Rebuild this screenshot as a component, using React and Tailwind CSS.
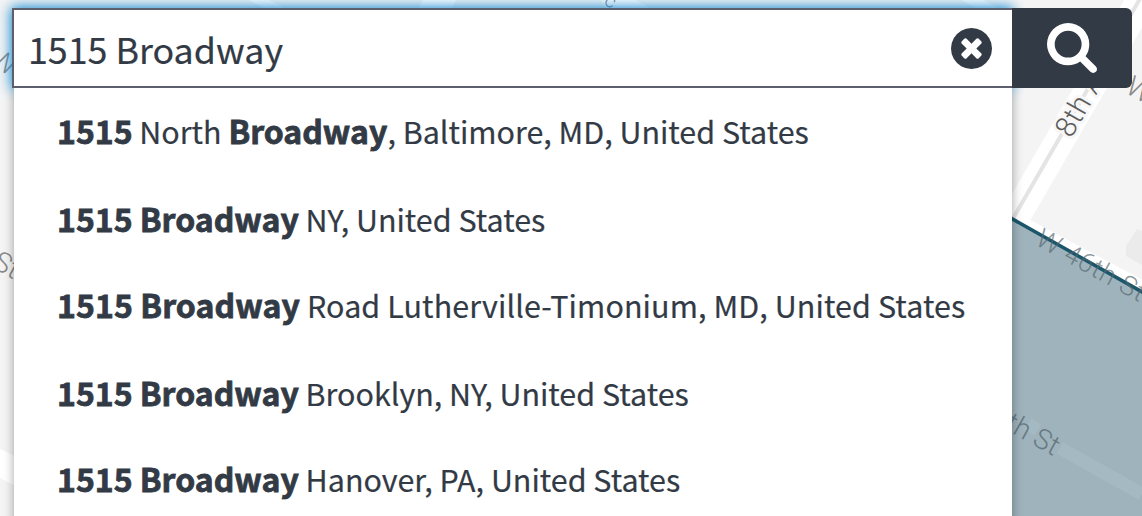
import React from "react";

const FONT = "font-['Noto_Sans_CJK_SC','Noto_Sans',sans-serif]";

const results = [
  { h: "h-[88px]", parts: [["1515", true], [" North ", false], ["Broadway", true], [", Baltimore, MD, United States", false]] },
  { h: "h-[86px]", parts: [["1515 Broadway", true], [" NY, United States", false]] },
  { h: "h-[88px]", tracking: "tracking-[0.1px]", parts: [["1515 Broadway", true], [" Road Lutherville-Timonium, MD, United States", false]] },
  { h: "h-[86px]", parts: [["1515 Broadway", true], [" Brooklyn, NY, United States", false]] },
  { h: "h-[80px]", parts: [["1515 Broadway", true], [" Hanover, PA, United States", false]] },
];

function MapBackdrop() {
  const label = "font-['Roboto',sans-serif] font-light";
  return (
    <svg className="absolute inset-0" width="1142" height="516" viewBox="0 0 1142 516" aria-hidden="true">
      <rect width="1142" height="516" fill="#f4f4f4" />
      <path d="M245 -2H265L300 16H280Z" fill="#fff" />
      <path d="M424 -2H457L450 12H417Z" fill="#fff" />
      <path d="M600 -2H632L665 16H610Z" fill="#fff" />
      <path d="M958 -2H980L1012 16H990Z" fill="#fff" />
      <path d="M-10 458L30 479" stroke="#fff" strokeWidth="26" />
      <path d="M997 249L1155 -24" stroke="#fff" strokeWidth="29" />
      <path d="M1000 212L1160 297" stroke="#fff" strokeWidth="14" />
      <path d="M1004 234L1152 -22" stroke="#e4e4e4" strokeWidth="4" />
      <path d="M1137 229L1142 231V265L1126 256V246Z" fill="#ebebeb" />
      <path d="M1000 212L1160 302V516H1000Z" fill="#9fb3bc" />
      <path d="M1028 424L1038 430M1060 448L1142 494" stroke="#a5b9c2" strokeWidth="13" />
      <path d="M1000 212L1160 302" stroke="#1b566b" strokeWidth="3.5" fill="none" />
      <g className={label} fontSize="28">
        <g stroke="#f7f7f7" strokeWidth="6" strokeLinejoin="round" paintOrder="stroke" fill="#5c5c5c">
          <text transform="translate(1071 139) rotate(-60)" fontSize="29" letterSpacing="0.4">8th A</text>
        </g>
        <text transform="translate(1124 92) rotate(29)" fill="#888">W</text>
        <text transform="translate(1034 244) rotate(29)" fontSize="27" letterSpacing="0.6" fill="#56676f" fillOpacity="0.7">W 46th St</text>
        <text transform="translate(990 421) rotate(29)" fill="#677a83">4th St</text>
        <text transform="translate(-12 64) rotate(29)" fill="#888">W</text>
        <text transform="translate(-9 267) rotate(29)" fill="#888">St</text>
        <text transform="translate(603 4) rotate(29)" fontSize="20" fill="#888">c</text>
      </g>
    </svg>
  );
}

function ClearIcon() {
  return (
    <svg className="size-[41px] fill-[#323a45]" viewBox="128 128 1536 1536">
      <path d="M1277 1122q0-26-19-45l-181-181 181-181q19-19 19-45 0-27-19-46l-90-90q-19-19-46-19-26 0-45 19l-181 181-181-181q-19-19-45-19-27 0-46 19l-90 90q-19 19-19 46 0 26 19 45l181 181-181 181q-19 19-19 45 0 27 19 46l90 90q19 19 46 19 26 0 45-19l181-181 181 181q19 19 45 19 27 0 46-19l90-90q19-19 19-46zm387-226q0 209-103 385.5t-279.5 279.5-385.5 103-385.5-103-279.5-279.5-103-385.5 103-385.5 279.5-279.5 385.5-103 385.5 103 279.5 279.5 103 385.5z" />
    </svg>
  );
}

function SearchIcon() {
  return (
    <svg className="size-[50px] fill-white" viewBox="64 128 1664 1664">
      <path d="M1216 832q0-185-131.5-316.5t-316.5-131.5-316.5 131.5-131.5 316.5 131.5 316.5 316.5 131.5 316.5-131.5 131.5-316.5zm512 832q0 52-38 90t-90 38q-54 0-90-38l-343-342q-179 124-399 124-143 0-273.5-55.5t-225-150-150-225-55.5-273.5 55.5-273.5 150-225 225-150 273.5-55.5 273.5 55.5 225 150 150 225 55.5 273.5q0 220-124 399l343 343q37 37 37 90z" />
    </svg>
  );
}

export default function App() {
  return (
    <div className={`relative h-[516px] w-[1142px] overflow-hidden text-[#323a45] ${FONT}`}>
      <MapBackdrop />
      {/* Focus glow, kept beneath the suggestion panel */}
      <div className="absolute top-2 left-3 h-20 w-[1000px] shadow-[0_0_12px_1px_#0b83cf]" />
      <div className="relative flex h-full flex-col pt-2 pl-3">
        <div className="relative z-10 flex h-20 shrink-0">
          <div className="flex w-[1000px] items-center justify-between border-2 border-r-0 border-[#5b606c] bg-white pr-5 pl-[14px]">
            <span className="-mt-px text-[35.8px] leading-[52px] whitespace-pre [-webkit-text-stroke:0.2px_#323a45]">1515 Broadway</span>
            <button className="mt-px" aria-label="Clear"><ClearIcon /></button>
          </div>
          <button className="relative flex w-[120px] items-center justify-center rounded-r-md bg-[#323a45]" aria-label="Search">
            <SearchIcon />
          </button>
        </div>
        <ul className="ml-0.5 h-[440px] w-[998px] shrink-0 bg-white shadow-[0_2px_10px_rgba(0,0,0,0.36)]">
          {results.map((row, i) => (
            <li key={i} className={`pt-[18px] pl-[43px] text-[32px] leading-[48px] whitespace-pre ${row.h} ${row.tracking ?? ""}`}>
              {row.parts.map(([text, bold], j) => (
                <span key={j} className={bold ? "font-bold [-webkit-text-stroke:0.8px_#323a45]" : "text-[30.45px] font-normal [-webkit-text-stroke:0.2px_#323a45]"}>{text}</span>
              ))}
            </li>
          ))}
        </ul>
      </div>
    </div>
  );
}
